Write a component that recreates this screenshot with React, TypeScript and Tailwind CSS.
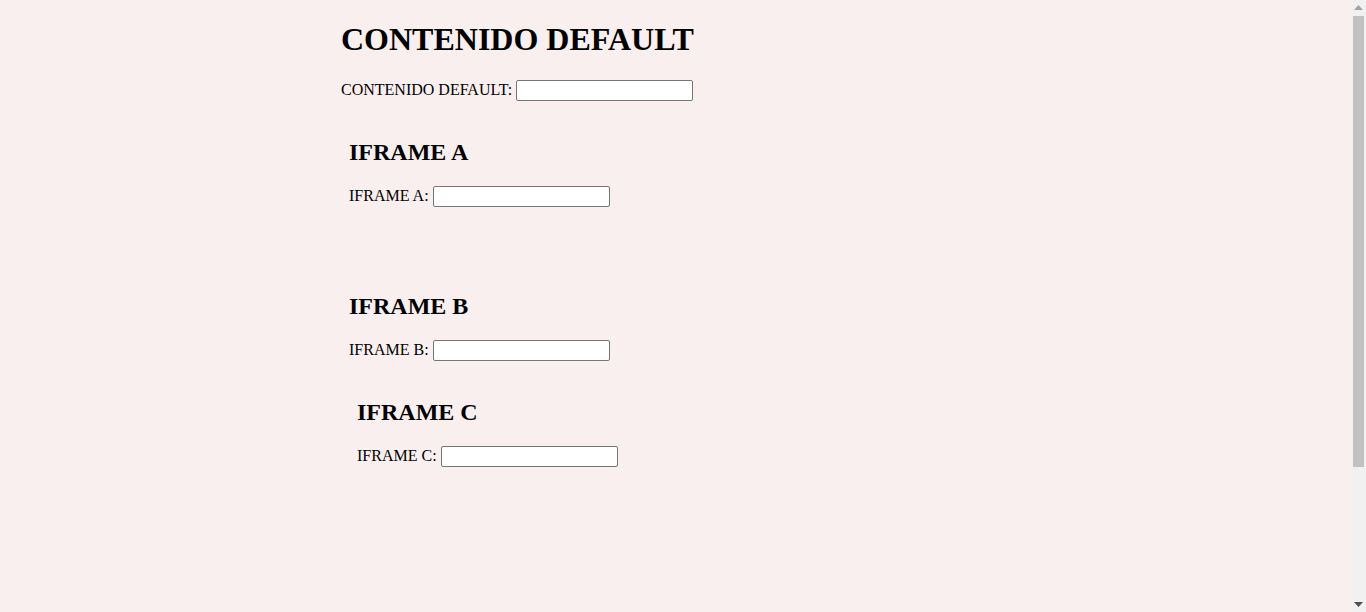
import React from 'react'

const FieldLine = ({ label }: { label: string }) => (
  <p className="text-[16px] leading-[normal]">
    {label}{' '}
    <input
      type="text"
      className="inline-block w-[177px] h-[21px] border border-[#767676] rounded-[2px] bg-white px-[2px] py-[1px] text-[13.33px] align-baseline outline-none"
    />
  </p>
)

const FrameHeading = ({ children }: { children: React.ReactNode }) => (
  <h2 className="text-[24px] font-bold leading-[normal] mb-[19.92px]">{children}</h2>
)

// barra de desplazamiento como la del navegador
const Scrollbar = () => (
  <div className="w-[15px] h-full flex flex-col bg-[#f1f1f1] shrink-0">
    <div className="h-[15px] flex items-center justify-center">
      <svg width="9" height="5" viewBox="0 0 9 5">
        <polygon points="0,5 4.5,0 9,5" fill="#a3a3a3" />
      </svg>
    </div>
    <div className="mx-[2px] mt-px h-[451px] bg-[#c1c1c1]" />
    <div className="flex-1" />
    <div className="h-[15px] flex items-center justify-center">
      <svg width="9" height="5" viewBox="0 0 9 5">
        <polygon points="0,0 9,0 4.5,5" fill="#505050" />
      </svg>
    </div>
  </div>
)

export default function App() {
  return (
    <div
      className="h-[612px] flex overflow-hidden bg-[#f8efee] text-black"
      style={{ fontFamily: '"Liberation Serif", "Times New Roman", serif' }}
    >
      <div className="flex-1 pl-[341px] pt-[21.44px]">
        <h1 className="text-[32px] font-bold leading-[normal] mb-[21.44px]">CONTENIDO DEFAULT</h1>
        <FieldLine label="CONTENIDO DEFAULT:" />

        {/* iframe A */}
        <div className="mt-[18px] w-[300px] h-[154px] px-2 pt-[19.92px]">
          <FrameHeading>IFRAME A</FrameHeading>
          <FieldLine label="IFRAME A:" />
        </div>

        {/* iframe B, con iframe C anidado */}
        <div className="w-[300px] px-2 pt-[19.92px]">
          <FrameHeading>IFRAME B</FrameHeading>
          <FieldLine label="IFRAME B:" />
          <div className="mt-[18px] w-[300px] h-[150px] px-2 pt-[19.92px]">
            <FrameHeading>IFRAME C</FrameHeading>
            <FieldLine label="IFRAME C:" />
          </div>
        </div>
      </div>
      <Scrollbar />
    </div>
  )
}
